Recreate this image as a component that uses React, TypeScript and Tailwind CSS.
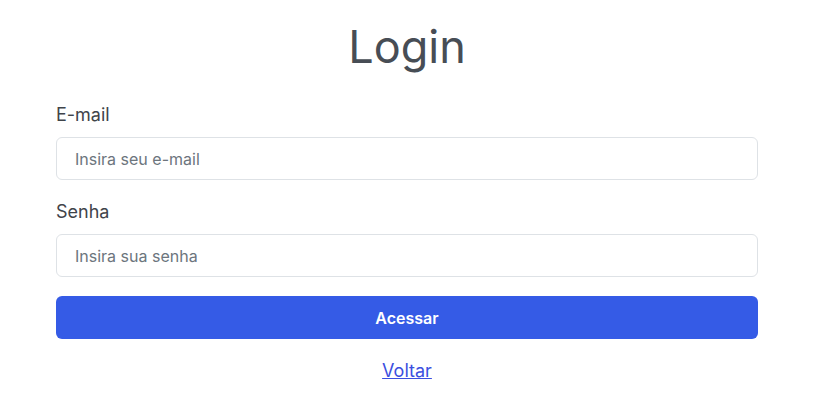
export default function App() {
  return (
    <div className="min-h-screen bg-white" style={{ fontFamily: "Inter, 'Noto Sans', sans-serif" }}>
      <div className="ml-[56px] w-[702px] flex flex-col pt-[20px]">
        <h1 className="text-center text-[45px] leading-[54px] text-[#474d55] font-normal">Login</h1>
        <label className="mt-[27px] text-[18px] leading-[27px] text-[#3f444a]">E-mail</label>
        <input
          type="email"
          placeholder="Insira seu e-mail"
          className="mt-[9px] h-[43px] w-full rounded-[6px] border border-[#dee2e6] px-[18px] text-[16px] text-[#212529] placeholder:text-[#6c757d] outline-none"
        />
        <label className="mt-[18px] text-[18px] leading-[27px] text-[#3f444a]">Senha</label>
        <input
          type="password"
          placeholder="Insira sua senha"
          className="mt-[9px] h-[43px] w-full rounded-[6px] border border-[#dee2e6] px-[18px] text-[16px] text-[#212529] placeholder:text-[#6c757d] outline-none"
        />
        <button className="mt-[19px] h-[43px] w-full rounded-[6px] bg-[#355be6] text-white text-[16px] font-semibold">
          Acessar
        </button>
        <div className="mt-[18px] text-center leading-[27px]">
          <a href="#" className="text-[18px] text-[#3b4fe0] underline">Voltar</a>
        </div>
      </div>
    </div>
  );
}
